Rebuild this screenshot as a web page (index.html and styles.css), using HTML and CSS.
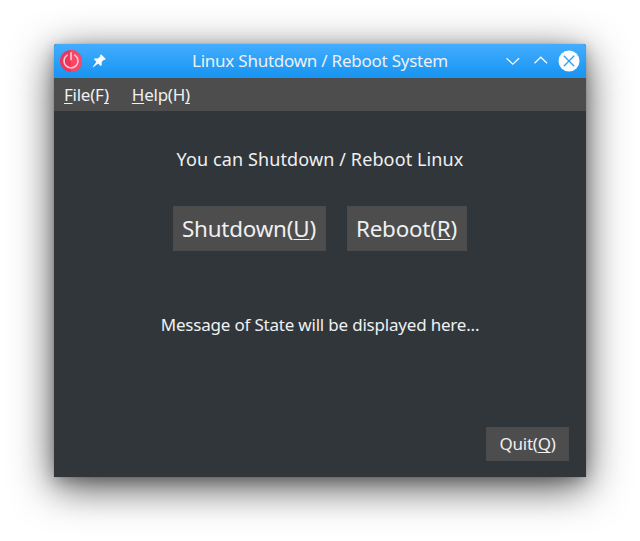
FILE: index.html
```
<!DOCTYPE html>
<html lang="en">
<head>
<meta charset="utf-8">
<title>Linux Shutdown / Reboot System</title>
<link rel="stylesheet" href="styles.css">
</head>
<body>
<main class="window">
  <header class="titlebar">
    <svg class="power" viewBox="0 0 22 22"><circle cx="11" cy="11" r="11" fill="#ed3659"/><path d="M11 0a11 11 0 0 1 0 22z" fill="#fb4765"/><path d="M7.2 5.1a7 7 0 1 0 7.6 0" fill="none" stroke="#f4cdd9" stroke-width="1.6" stroke-linecap="round"/><path d="M11 2.7v7" stroke="#f4cdd9" stroke-width="1.6" stroke-linecap="round"/></svg>
    <svg class="pin" viewBox="0 0 14 14"><path d="M9 .3 13.7 5l-1.2 1-.7-.3-2.2 2.5.2 2.8-1.2 1-2.4-2.4L1.5 13 .5 13.5 1 12.5 4.4 7.8 2 5.4l1-1.2 2.8.2 2.5-2.2L8 1.5z" fill="#fcfcfc"/></svg>
    <h1 class="title">Linux Shutdown / Reboot System</h1>
    <svg class="control" viewBox="0 0 22 22"><path d="m4.5 8.2 6.3 6 6.3-6" fill="none" stroke="#fcfcfc" stroke-width="1.2"/></svg>
    <svg class="control" viewBox="0 0 22 22"><path d="m4.5 13.2 6.3-6 6.3 6" fill="none" stroke="#fcfcfc" stroke-width="1.2"/></svg>
    <svg class="control" viewBox="0 0 22 22"><circle cx="11" cy="11" r="10.5" fill="#fcfcfc"/><path d="m5.8 5.8 10.4 10.4M16.2 5.8 5.8 16.2" stroke="#329fee" stroke-width="1.3"/></svg>
  </header>
  <nav class="menubar">
    <span class="menu"><span class="key">F</span>ile(F<span class="key">)</span></span>
    <span class="menu"><span class="key">H</span>elp(H<span class="key">)</span></span>
  </nav>
  <section class="content">
    <p class="prompt">You can Shutdown / Reboot Linux</p>
    <div class="actions">
      <button class="button shutdown">Shutdown(<span class="key">U</span>)</button>
      <button class="button reboot">Reboot(<span class="key">R</span>)</button>
    </div>
    <p class="status">Message of State will be displayed here...</p>
    <button class="button quit">Quit(<span class="key">Q</span>)</button>
  </section>
</main>
</body>
</html>
```
FILE: styles.css
```
* { box-sizing: border-box; }
body {
  margin: 0;
  height: 541px;
  padding: 44px 54px 64px;
  background: #fff;
  color: #eff0f1;
  font-family: "Noto Sans", sans-serif;
  overflow: hidden;
}
.window {
  display: flex;
  flex-direction: column;
  height: 433px;
  border-radius: 3px 3px 0 0;
  background: #31363b;
  box-shadow: 0 0 1px rgba(0,0,0,.4), 0 10px 40px rgba(0,0,0,.7), 0 4px 14px rgba(0,0,0,.2);
}
.titlebar {
  display: flex;
  align-items: center;
  height: 34px;
  padding: 0 6px;
  border-radius: 3px 3px 0 0;
  background: linear-gradient(#43adff, #1b96f2 90%);
}
.power { width: 22px; height: 22px; }
.pin { width: 14px; height: 14px; margin-left: 10px; }
.title {
  flex: 1;
  margin: 0 0 0 38px;
  font-size: 17px;
  font-weight: 400;
  letter-spacing: -.24px;
  line-height: 34px;
  text-align: center;
  white-space: nowrap;
}
.control { width: 22px; height: 22px; margin-left: 6px; }
.menubar {
  display: flex;
  gap: 23px;
  height: 33px;
  padding-left: 10px;
  background: #4d4d4d;
  font-size: 17px;
  letter-spacing: -.25px;
  line-height: 34px;
}
.key {
  text-decoration: underline;
  text-decoration-thickness: 1px;
  text-underline-offset: 2px;
  text-decoration-skip-ink: none;
}
.content {
  display: flex;
  flex: 1;
  flex-direction: column;
  align-items: center;
}
.prompt { margin: 34px 0 0; font-size: 18px; letter-spacing: .12px; line-height: 28px; white-space: nowrap; }
.actions { display: flex; gap: 21px; margin: 33px 0 0 -1px; }
.button {
  padding: 0 0 1px;
  border: 1px solid #494b4c;
  background: #4d4d4d;
  color: inherit;
  font-family: inherit;
  white-space: nowrap;
}
.shutdown, .reboot { height: 45px; font-size: 22.4px; letter-spacing: -.2px; }
.shutdown { width: 153px; }
.reboot { width: 120px; }
.status { margin: 60px 0 0; font-size: 17px; letter-spacing: -.2px; line-height: 28px; white-space: nowrap; }
.quit {
  align-self: flex-end;
  width: 83px;
  height: 34px;
  margin: auto 17px 16px 0;
  font-size: 17px;
  letter-spacing: -.25px;
}
```
